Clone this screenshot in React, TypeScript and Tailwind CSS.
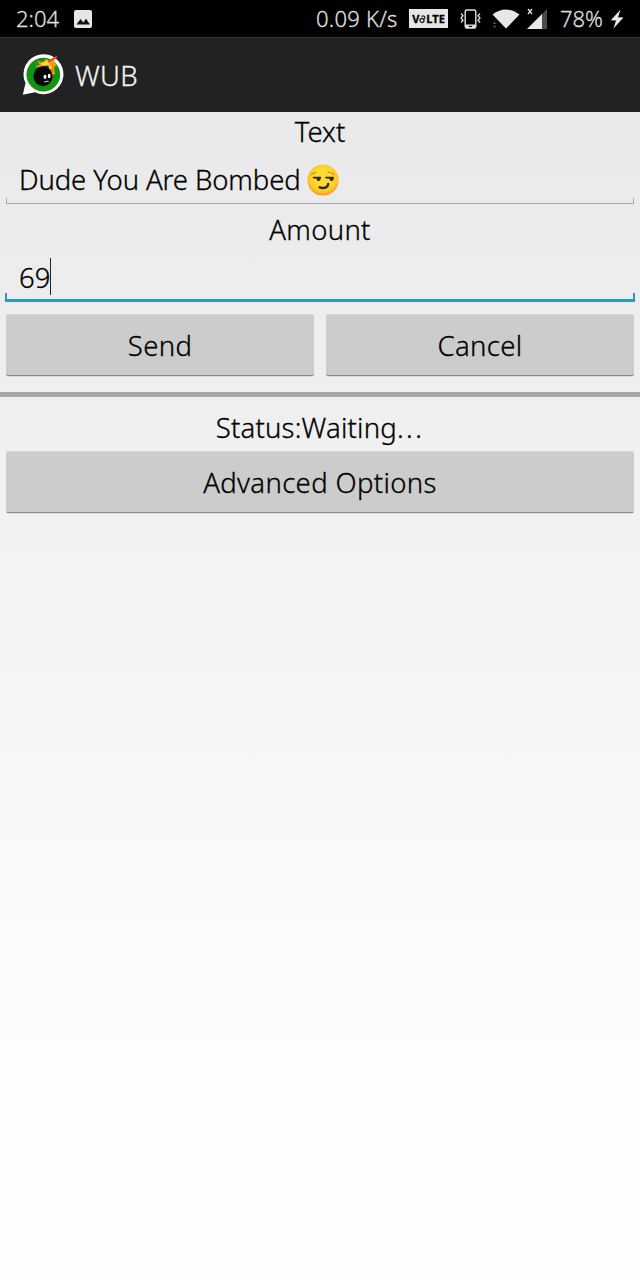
import type { ReactNode } from 'react'

function StatusBar() {
  return (
    <div className="flex h-[37px] items-center bg-black text-[22px] leading-[37px] text-[#dedede]">
      <span className="ml-[16px] w-[58px]">2:04</span>
      <svg className="h-[18px] w-[18px]" viewBox="0 0 18 18">
        <rect width="18" height="18" rx="2" fill="#e6e6e6" />
        <path d="M2.5 14.5 6.5 9l2.8 3.4L12 8.8l4 5.7z" fill="#111" />
      </svg>
      <span className="ml-[224px] w-[93px] whitespace-nowrap tracking-[0.25px]">0.09 K/s</span>
      <span className="flex h-[19px] w-[39px] items-center justify-center bg-[#e6e6e6] text-[11px] font-bold leading-none text-black">
        V
        <svg className="h-[10px] w-[7px]" viewBox="0 0 7 10" fill="none" stroke="#222" strokeWidth="1.3">
          <circle cx="3" cy="6.5" r="2" />
          <path d="M2.5 2.5C4.5 1.2 6.5 2.5 5.5 5" />
        </svg>
        LTE
      </span>
      <svg className="ml-[12px] h-[20px] w-[21px]" viewBox="0 0 21 20" fill="none" stroke="#e0e0e0">
        <rect x="5.2" y="1" width="10.6" height="18" rx="1.6" strokeWidth="1.4" />
        <path d="M6 16h9v2.6H6z" fill="#e0e0e0" />
        <path d="M8.8 17.4h3.4" stroke="#111" strokeWidth="1.2" />
        <path d="M1 4.5 3 6.8 1 9l2 2.3-2 2.2M20 4.5l-2 2.3L20 9l-2 2.3 2 2.2" strokeWidth="1.3" />
      </svg>
      <svg className="ml-[11px] h-[20px] w-[28px]" viewBox="0 0 28 20">
        <path d="M.5 5.6Q14-4.6 27.5 5.6L14 19.5z" fill="#e8e8e8" />
        <path d="m.5 15 2-2.4 2 2.4zM.5 16.8l2 2.4 2-2.4z" fill="#484848" />
      </svg>
      <svg className="ml-[6px] h-[22px] w-[22px]" viewBox="0 0 22 22">
        <path d="m2 1 4 5M6 1 2 6" stroke="#ddd" strokeWidth="1.3" />
        <path d="M21 1v20h-6V7z" fill="#4a4a4a" />
        <path d="M16 6v15H1z" fill="#e8e8e8" />
      </svg>
      <span className="ml-[12px] w-[49px]">78%</span>
      <svg className="ml-px h-[20px] w-[14px]" viewBox="0 0 14 20">
        <path d="M10.5.5.8 11.2 6 11.6 3.5 19.5 13.5 8.6 8 8.2z" fill="#e8e8e8" />
      </svg>
    </div>
  )
}

function AppIcon() {
  return (
    <svg className="ml-[22px] h-[42px] w-[42px]" viewBox="0 0 42 42">
      <path d="M.8 40.8 3.5 29A20 20 0 1 1 13 38.3z" fill="#fff" />
      <circle cx="21.3" cy="20.6" r="16.9" fill="#129312" />
      <path d="m13 12 5-1-3-4 6 1 3-3 3 2 7-4-2 5 3 3-3 2 1 7-3 1-1 4-5-9z" fill="#f79a12" />
      <path d="m18 9 5-1 2-2 3 1-1 4 5 3-5 1v5l-4-6z" fill="#ffd93a" />
      <path d="m26 8 9-5.5" stroke="#e6451b" strokeWidth="1.8" />
      <path d="m15 7 5 2M31 12l-1 6" stroke="#ef6a16" strokeWidth="1.2" />
      <path d="m19.5 12 7-.5.5 4h-7z" fill="#333" />
      <ellipse cx="21" cy="22.2" rx="9.6" ry="10" fill="#070707" />
      <ellipse cx="23" cy="22.8" rx="1.5" ry="2.1" fill="#fff" />
      <ellipse cx="27.2" cy="22" rx="1.4" ry="2.3" fill="#fff" />
      <path d="M22.4 28.4q2-1.8 4.2-.8" stroke="#ccc" strokeWidth="1.2" fill="none" />
    </svg>
  )
}

function ActionBar() {
  return (
    <div className="flex h-[75px] items-center border-t border-[#363636] bg-[#222] text-[#f2f2f2]">
      <AppIcon />
      <span className="ml-[11px] pt-px text-[27.5px] tracking-[0.3px]">WUB</span>
    </div>
  )
}

function SmirkEmoji() {
  return (
    <svg className="ml-[6px] h-[32px] w-[32px]" viewBox="0 0 32 32" fill="none">
      <defs>
        <radialGradient id="face" cx="50%" cy="42%" r="56%">
          <stop offset="0.5" stopColor="#fddb32" />
          <stop offset="0.85" stopColor="#fbc426" />
          <stop offset="1" stopColor="#f09a22" />
        </radialGradient>
      </defs>
      <circle cx="16" cy="16" r="15.6" fill="url(#face)" />
      <path d="M4.5 11Q6 8.6 9 8.6M21 8.4q3.5-.6 6 2.4" stroke="#c98a17" strokeWidth="1.1" strokeLinecap="round" />
      <path d="M6.5 13.6h7M19 13.6h7.2" stroke="#30241b" strokeWidth="1.6" strokeLinecap="round" />
      <path d="M9.3 13.5h4.4q0 3.4-2.2 3.4t-2.2-3.4zM22.3 13.5h4.4q0 3.4-2.2 3.4t-2.2-3.4z" fill="#30241b" />
      <path d="M12.8 23.4q3 1.4 6 0 2.2-1.1 2.4-3.4" stroke="#30241b" strokeWidth="2.5" strokeLinecap="round" />
    </svg>
  )
}

function HoloButton({ children }: { children: ReactNode }) {
  return (
    <button className="h-[62px] flex-1 rounded-[2px] border-t border-b border-t-[#d6d6d6] border-b-[#8c8c8c] bg-[#ccc] pt-px text-center tracking-[0.35px] shadow-[0_1px_0_#dcdcdc]">
      {children}
    </button>
  )
}

export default function App() {
  return (
    <div className="flex h-[1280px] w-[640px] flex-col overflow-hidden bg-white font-['Noto_Sans',sans-serif] font-light text-black [-webkit-text-stroke:0.3px]">
      <StatusBar />
      <ActionBar />
      <main className="flex flex-1 flex-col bg-linear-to-b from-[#e9e9e9] to-[#fefefe] to-85% text-[27.5px] leading-[40px]">
        <div className="h-[40px] text-center">Text</div>

        <div className="mx-[6px] mt-[6px] flex h-[46px] flex-col">
          <div className="flex h-[40px] items-center pl-[13px] pt-[4px]">
            <span className="w-[282px] whitespace-nowrap tracking-[-0.1px]">Dude You Are Bombed</span>
            <SmirkEmoji />
          </div>
          <div className="h-[6px] border border-t-0 border-[#a4a8aa]" />
        </div>

        <div className="mt-[6px] h-[40px] text-center tracking-[0.3px]">Amount</div>

        <div className="mx-[5px] mt-[6px] flex h-[46px] flex-col">
          <div className="flex h-[37px] items-center pl-[14px] pt-[4px]">
            <span className="w-[31px] pt-[2px]">69</span>
            <span className="h-[37px] w-px bg-[#222]" />
          </div>
          <div className="h-[9px] border-2 border-t-0 border-b-3 border-[#2e9ab8]" />
        </div>

        <div className="mx-[6px] mt-[12px] flex gap-[12px]">
          <HoloButton>Send</HoloButton>
          <HoloButton>Cancel</HoloButton>
        </div>

        <div className="mt-[16px] h-[5px] bg-[#a8a8a8]" />

        <div className="mt-[11px] h-[40px] text-center tracking-[0.2px]">
          Status:Waiting<span className="tracking-[2.4px]">...</span>
        </div>
        <div className="mx-[6px] mt-[3px] flex">
          <HoloButton>Advanced Options</HoloButton>
        </div>
      </main>
    </div>
  )
}
